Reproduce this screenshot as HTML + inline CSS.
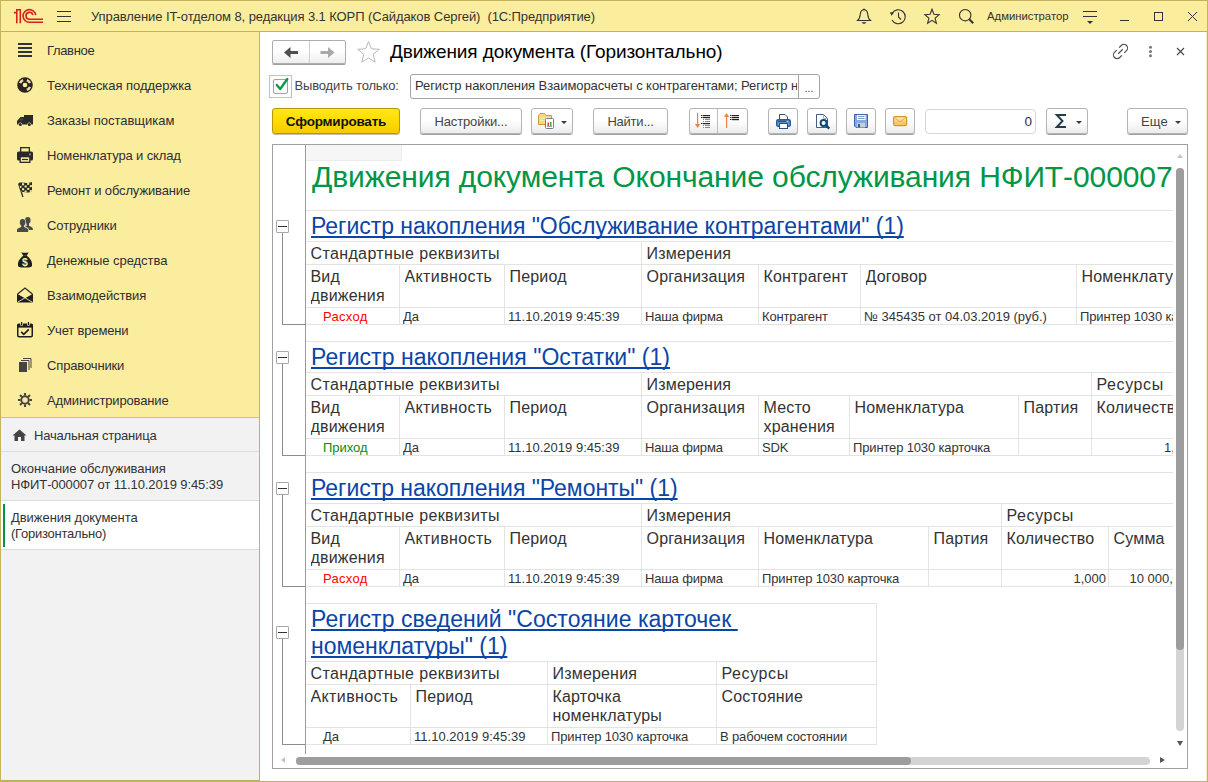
<!DOCTYPE html><html lang='ru'><head><meta charset='utf-8'><title>Движения документа (Горизонтально)</title><style>
*{box-sizing:border-box;margin:0;padding:0}
html,body{width:1208px;height:782px;overflow:hidden;background:#fff}
body{position:relative;font-family:"Liberation Sans",sans-serif;font-size:13px;color:#333}
.abs{position:absolute}
i{display:block;font-style:normal}
#frame{position:absolute;left:0;top:0;width:1208px;height:782px;border:1px solid #c3b35a;z-index:50}
#frame i{position:absolute;right:0;top:31px;width:1px;height:749px;background:#f3edcf}
#titlebar{position:absolute;left:0;top:0;width:1208px;height:32px;background:#fbed9e;border-bottom:1px solid #c3b35a}
#titlebar .t{position:absolute;left:91px;top:8.500px;font-size:13px;line-height:16px;white-space:pre;color:#333}
#user{position:absolute;left:987px;top:8px;font-size:11.3px;line-height:16px;color:#333}
#side{position:absolute;left:0;top:32px;width:260px;height:749px;background:#f2f2f2;border-right:1px solid #c3b35a;border-bottom:1px solid #bcab58}
#sections{position:absolute;left:0;top:0;width:259px;height:386px;background:#fbed9e;border-bottom:1px solid #d2c277}
.sec{position:absolute;left:0;width:259px;height:35px}
.sec span{position:absolute;left:47px;top:10.500px;line-height:16px;font-size:13px;white-space:nowrap;color:#2e2e33}
.sec svg{position:absolute;left:16px;top:9px}
#open{position:absolute;left:0;top:386px;width:259px;height:364px}
.oi{position:absolute;left:0;width:259px;border-bottom:1px solid #dcdcdc;font-size:13px;line-height:16px;color:#333}
.oi span{position:absolute;left:11px;white-space:nowrap}
#main{position:absolute;left:260px;top:32px;width:947px;height:749px;background:#fff}
.btn{position:absolute;height:26px;top:108px;border:1px solid #b4b4b4;border-radius:3px;background:linear-gradient(#ffffff,#ffffff 45%,#ececec);box-shadow:0 1px 0 #a0a0a0;font-size:13px;line-height:25px;text-align:center;color:#444;white-space:nowrap}
.btn svg{position:absolute}
.dd{position:absolute;width:0;height:0;border-left:3px solid transparent;border-right:3px solid transparent;border-top:3px solid #3a3a3a}
#sheet{position:absolute;left:272px;top:144px;width:916px;height:625px;border:1px solid #a0a0a0;background:#fff;overflow:hidden}
#view{position:absolute;left:33px;top:0;width:867px;height:608px;overflow:hidden}
.hl{position:absolute;height:1px;background:#e3e3e3}
.vl{position:absolute;width:1px;background:#e3e3e3}
.c{position:absolute;white-space:nowrap;overflow:hidden;color:#333}
.h{font-size:16px;line-height:19.500px;letter-spacing:0.18px}
.d{font-size:13px;line-height:16px;letter-spacing:-0.15px}
.lnk{position:absolute;font-size:23px;line-height:27px;color:#0b45a8;text-decoration:underline;text-decoration-thickness:2px;text-underline-offset:2px;text-decoration-skip-ink:none;letter-spacing:-0.03px;white-space:nowrap}
.gl{position:absolute;background:#8c8c8c}
.gb{position:absolute;width:13px;height:13px;border:1px solid #a8a8a8;border-radius:1px;background:#fff}
.gb i{position:absolute;left:1px;top:5px;width:9px;height:1px;background:#333}
</style></head><body>
<div id='titlebar'>
<svg class='abs' style='left:13px;top:8px' width='31' height='16' viewBox='0 0 31 16'>
<g fill='none' stroke='#d8201c' stroke-width='1.600'>
<path d='M0.900 4.600H3.800V15.200M3.800 4.600V1.700H7.300V15.200'/>
<path d='M22.700 7.200A6.350 6.350 0 1 0 16.400 14.300H30'/>
<path d='M19.800 7A3.450 3.450 0 1 0 16.400 11.200H30'/>
</g></svg>
<svg class='abs' style='left:57px;top:10px' width='15' height='13' viewBox='0 0 15 13'><g stroke='#333' stroke-width='1'><path d='M0 1.500H14M0 6.500H14M0 11.500H14'/></g></svg>
<div class='t' style='letter-spacing:-0.088px'>Управление IT-отделом 8, редакция 3.1 КОРП (Сайдаков Сергей)  (1С:Предприятие)</div>
<svg class='abs' style='left:856px;top:8px' width='16' height='17' viewBox='0 0 16 17'><g fill='none' stroke='#333' stroke-width='1.100'><path d='M1.600 12.500C4 10.800 4 8 4.400 5.300C4.800 3 6.200 1.800 8 1.800C9.800 1.800 11.200 3 11.600 5.300C12 8 12 10.800 14.400 12.500Z'/></g><circle cx='8' cy='1.300' r='0.900' fill='#333'/><path d='M5.400 14.200H10.600L8 16.200Z' fill='#333'/></svg>
<svg class='abs' style='left:889px;top:8px' width='18' height='17' viewBox='0 0 18 17'><g fill='none' stroke='#333' stroke-width='1.100'><path d='M3.200 5.200 A7 7 0 1 1 3 12'/><path d='M9.500 4.500 V9 L12 11.500'/></g><path d='M0.800 4.200 L5 4.600 L2.600 7.800Z' fill='#333'/></svg>
<svg class='abs' style='left:923px;top:8px' width='18' height='17' viewBox='0 0 18 17'><path d='M9 1.200 L10.900 6.300 L16.100 6.700 L12.100 10.100 L13.400 15.200 L9 12.400 L4.600 15.200 L5.900 10.100 L1.900 6.700 L7.100 6.300 Z' fill='none' stroke='#333' stroke-width='1.100' stroke-linejoin='miter'/></svg>
<svg class='abs' style='left:958px;top:8px' width='17' height='17' viewBox='0 0 17 17'><circle cx='7.200' cy='7.200' r='5.700' fill='none' stroke='#333' stroke-width='1.100'/><path d='M11.300 11.300 L15.200 15.200' stroke='#333' stroke-width='2'/></svg>
<div id='user'>Администратор</div>
<svg class='abs' style='left:1082px;top:10px' width='16' height='15' viewBox='0 0 16 15'><path d='M1 1.500H15M1 6.500H15' stroke='#333' stroke-width='1'/><path d='M5 11H11L8 14Z' fill='#333'/></svg>
<svg class='abs' style='left:1120px;top:11px' width='80' height='12' viewBox='0 0 80 12'><g fill='none' stroke='#333' stroke-width='1'><path d='M0 9.500H9'/><rect x='34.500' y='1.500' width='8' height='8'/><path d='M68 1L77 10M77 1L68 10'/></g></svg>
</div>
<div id='side'><div id='sections'>
<div class='sec' style='top:0px'><svg width='18' height='18' viewBox='0 0 18 18'><g fill='#30343c'><rect x='2' y='2' width='14' height='2'/><rect x='2' y='6' width='14' height='2'/><rect x='2' y='10' width='14' height='2'/><rect x='2' y='14' width='14' height='2'/></g></svg><span style='letter-spacing:-0.339px'>Главное</span></div>
<div class='sec' style='top:35px'><svg width='18' height='18' viewBox='0 0 18 18'><circle cx='9' cy='9' r='7.800' fill='#2b2223'/><g fill='none' stroke='#eadb9e' stroke-width='2.500'><path d='M13.950 10.900A5.300 5.300 0 0 1 10.900 13.950'/><path d='M10.900 4.050A5.300 5.300 0 0 1 13.950 7.100'/><path d='M4.050 7.100A5.300 5.300 0 0 1 7.100 4.050'/></g><circle cx='9' cy='9' r='2.300' fill='#fbed9e'/></svg><span style='letter-spacing:-0.032px'>Техническая поддержка</span></div>
<div class='sec' style='top:70px'><svg width='18' height='18' viewBox='0 0 18 18'><path d='M8 4H17V13.400H1V10L4.500 6H8Z' fill='#2a2a2a'/><path d='M4.900 7.200H7V9.400H3Z' fill='#454545'/><circle cx='4.300' cy='13.600' r='2' fill='#fbed9e'/><circle cx='13.300' cy='13.600' r='2' fill='#fbed9e'/><circle cx='4.300' cy='13.600' r='1.500' fill='#2a2a2a'/><circle cx='13.300' cy='13.600' r='1.500' fill='#2a2a2a'/></svg><span style='letter-spacing:-0.032px'>Заказы поставщикам</span></div>
<div class='sec' style='top:105px'><svg width='18' height='18' viewBox='0 0 18 18'><rect x='4.650' y='1.650' width='8.700' height='5' fill='none' stroke='#2a2a2a' stroke-width='1.300'/><rect x='1' y='5.500' width='16' height='9' rx='1.600' fill='#2a2a2a'/><rect x='13' y='7.500' width='1.800' height='1.800' fill='#8a8a8a'/><rect x='4.150' y='10.650' width='9.700' height='5.700' fill='#fbed9e' stroke='#2a2a2a' stroke-width='1.300'/><path d='M6 13.500H12' stroke='#2a2a2a' stroke-width='1.200'/></svg><span style='letter-spacing:-0.138px'>Номенклатура и склад</span></div>
<div class='sec' style='top:140px'><svg width='18' height='18' viewBox='0 0 18 18'><path d='M2.600 2.600L6.900 16' stroke='#2a2a2a' stroke-width='1.300'/><clipPath id='fl'><path d='M2.600 2C6 0.600 9 3.400 16 1L16 10.500C11 12.800 8 10 5.600 11.600Z'/></clipPath><g clip-path='url(#fl)'><rect x='0' y='0' width='18' height='13' fill='#2a2a2a'/><g fill='#fbed9e' transform='skewY(-4) translate(0 1)'><rect x='6.0' y='1.7' width='2.100' height='2'/><rect x='11.2' y='1.7' width='2.100' height='2'/><rect x='3.4' y='4.2' width='2.100' height='2'/><rect x='8.6' y='4.2' width='2.100' height='2'/><rect x='13.8' y='4.2' width='2.100' height='2'/><rect x='6.0' y='6.7' width='2.100' height='2'/><rect x='11.2' y='6.7' width='2.100' height='2'/><rect x='3.4' y='9.2' width='2.100' height='2'/><rect x='8.6' y='9.2' width='2.100' height='2'/><rect x='13.8' y='9.2' width='2.100' height='2'/><rect x='6.0' y='11.7' width='2.100' height='2'/><rect x='11.2' y='11.7' width='2.100' height='2'/></g></g></svg><span style='letter-spacing:-0.143px'>Ремонт и обслуживание</span></div>
<div class='sec' style='top:175px'><svg width='18' height='18' viewBox='0 0 18 18'><g fill='#4a4a4a'><ellipse cx='11.800' cy='4.400' rx='2.700' ry='3.300'/><path d='M7 14C7 11 9.600 10.600 10.600 9.800V6H13V9.800C14 10.600 17 10.600 17 14Z'/><ellipse cx='6.600' cy='6.500' rx='3.400' ry='4' fill='#fbed9e'/><path d='M0.300 16.700V14C0.300 11 3.800 11.400 4.600 10V8H8.600V10C9.400 11.400 12.900 11 12.900 14V16.700Z' fill='#fbed9e'/><ellipse cx='6.600' cy='6.500' rx='2.800' ry='3.400'/><path d='M1 16V14.200C1 12 4.300 12.100 5.300 10.600V8H7.900V10.600C8.900 12.100 12.200 12 12.200 14.200V16Z'/></g></svg><span style='letter-spacing:-0.081px'>Сотрудники</span></div>
<div class='sec' style='top:210px'><svg width='18' height='18' viewBox='0 0 18 18'><path d='M5.300 1.200C7 2 11 2 12.700 1.200L10.800 4.800H7.200Z' fill='#1e1e1e'/><path d='M7.200 4.800H10.800C14 7.500 16.500 10.500 16 14.500C15.800 16 14.800 16.500 9 16.500C3.200 16.500 2.200 16 2 14.500C1.500 10.500 4 7.500 7.200 4.800Z' fill='#1e1e1e'/><text x='9' y='15.300' font-size='10.500' font-weight='bold' text-anchor='middle' fill='#fbed9e' font-family='Liberation Sans,sans-serif'>$</text></svg><span style='letter-spacing:-0.039px'>Денежные средства</span></div>
<div class='sec' style='top:245px'><svg width='18' height='18' viewBox='0 0 18 18'><path d='M1.600 8L9 2L16.400 8' fill='none' stroke='#2a2a2a' stroke-width='1.300'/><path d='M1 7.800L9 12.200L17 7.800V16.500H1Z' fill='#1e1e1e'/><path d='M1.300 16.400L9 11.800L16.700 16.400' fill='none' stroke='#fbed9e' stroke-width='0.900'/></svg><span style='letter-spacing:-0.11px'>Взаимодействия</span></div>
<div class='sec' style='top:280px'><svg width='18' height='18' viewBox='0 0 18 18'><rect x='1.750' y='3.250' width='14.500' height='12.500' rx='1.200' fill='none' stroke='#1e1e1e' stroke-width='1.500'/><rect x='1.500' y='3' width='15' height='3.600' fill='#1e1e1e'/><g fill='#fbed9e'><rect x='4.300' y='0.800' width='2.600' height='4.200' rx='1'/><rect x='11.100' y='0.800' width='2.600' height='4.200' rx='1'/></g><g fill='#1e1e1e'><rect x='5' y='1' width='1.200' height='3.400'/><rect x='11.800' y='1' width='1.200' height='3.400'/></g><path d='M5.200 10.800L7.800 13.300L12.800 8.300' fill='none' stroke='#1e1e1e' stroke-width='1.700'/></svg><span style='letter-spacing:-0.173px'>Учет времени</span></div>
<div class='sec' style='top:315px'><svg width='18' height='18' viewBox='0 0 18 18'><rect x='3' y='6' width='8' height='10' fill='#444'/><path d='M5 4.500H13V14M7 2.500H15V12' fill='none' stroke='#444' stroke-width='1'/></svg><span style='letter-spacing:-0.141px'>Справочники</span></div>
<div class='sec' style='top:350px'><svg width='18' height='18' viewBox='0 0 18 18'><circle cx='9' cy='9' r='3.700' fill='none' stroke='#444' stroke-width='1.900'/><g stroke='#444' stroke-width='2.100'><path d='M9 2V4.600M9 13.400V16M2 9H4.600M13.400 9H16M4.050 4.050L5.900 5.900M13.950 4.050L12.100 5.900M4.050 13.950L5.900 12.100M13.950 13.950L12.100 12.100'/></g></svg><span style='letter-spacing:-0.145px'>Администрирование</span></div>
</div>
<div id='open'>
<div class='oi' style='top:0;height:34px'><svg class='abs' style='left:12px;top:11px' width='15' height='12' viewBox='0 0 15 12'><path d='M7.500 0.500L14.500 6.500H12.500V12H9V8H6V12H2.500V6.500H0.500Z' fill='#444'/></svg><span style='left:34px;top:10px'><b style='font-weight:normal;letter-spacing:-0.183px'>Начальная страница</b></span></div>
<div class='oi' style='top:34px;height:49px'><span style='top:9px'><b style='font-weight:normal;letter-spacing:-0.074px'>Окончание обслуживания</b><br><b style='font-weight:normal;letter-spacing:-0.105px'>НФИТ-000007 от 11.10.2019 9:45:39</b></span></div>
<div class='oi' style='top:83px;height:49px;background:#fff'><i class='abs' style='left:3px;top:3px;width:2px;height:43px;background:#009646'></i><span style='top:9px'><b style='font-weight:normal;letter-spacing:-0.043px'>Движения документа</b><br><b style='font-weight:normal;letter-spacing:-0.239px'>(Горизонтально)</b></span></div>
</div></div>
<div id='main'></div>
<div class='abs' style='left:272px;top:40px;width:74px;height:24px;border:1px solid #adadad;border-radius:2px;background:linear-gradient(#fff,#fff 45%,#eee);box-shadow:0 1px 0 #a0a0a0'>
<i class='abs' style='left:36px;top:0;width:1px;height:22px;background:#cfcfcf'></i>
<svg class='abs' style='left:11px;top:6px' width='15' height='11' viewBox='0 0 15 11'><path d='M0 5.500L6.500 0V4H14V7H6.500V11Z' fill='#4f4f4f'/></svg>
<svg class='abs' style='left:47px;top:6px' width='15' height='11' viewBox='0 0 15 11'><path d='M14.500 5.500L8 0V4H0.500V7H8V11Z' fill='#a9a9a9'/></svg>
</div>
<svg class='abs' style='left:356px;top:40px' width='25' height='24' viewBox='0 0 25 24'><path d='M12.500 1.500L15.400 8.800L23.300 9.300L17.200 14.400L19.200 22.200L12.500 17.900L5.800 22.200L7.800 14.400L1.700 9.300L9.600 8.800Z' fill='#fff' stroke='#b3b9bf' stroke-width='1'/></svg>
<div class='abs' style='left:390px;top:39.500px;font-size:19px;line-height:24px;color:#000;white-space:nowrap;letter-spacing:-0.089px'>Движения документа (Горизонтально)</div>
<svg class='abs' style='left:1112px;top:43px' width='17' height='17' viewBox='0 0 17 17'><g fill='none' stroke='#4a4a4a' stroke-width='1.100' transform='rotate(-45 8.500 8.500)'><path d='M6.800 4.800H3.700A3.700 3.700 0 0 0 3.700 12.200H6.800'/><path d='M10.200 4.800H13.300A3.700 3.700 0 0 1 13.300 12.200H10.200'/><path d='M5.300 8.500H11.700'/></g></svg>
<svg class='abs' style='left:1148px;top:45px' width='5' height='13' viewBox='0 0 5 13'><g fill='#777'><circle cx='2.500' cy='2.200' r='1.500'/><circle cx='2.500' cy='6.500' r='1.500'/><circle cx='2.500' cy='10.800' r='1.500'/></g></svg>
<svg class='abs' style='left:1176px;top:47px' width='9' height='9' viewBox='0 0 9 9'><path d='M1 1L8 8M8 1L1 8' stroke='#444' stroke-width='1.100'/></svg>
<div class='abs' style='left:269px;top:75px;width:23px;height:23px;border:1px solid #fbc520'></div>
<div class='abs' style='left:273px;top:79px;width:15px;height:15px;border:1px solid #a2a2a2;border-radius:2px;background:#fff'></div>
<svg class='abs' style='left:274px;top:76px' width='16' height='17' viewBox='0 0 16 17'><path d='M2.800 9L6.200 13L13.300 3' fill='none' stroke='#0a9a46' stroke-width='2.300' stroke-linecap='round' stroke-linejoin='round'/></svg>
<div class='abs' style='left:294.500px;top:77.500px;line-height:16px;font-size:13px;letter-spacing:-0.156px;white-space:nowrap;color:#444'>Выводить только:</div>
<div class='abs' style='left:410px;top:74px;width:389px;height:25px;border:1px solid #a3a3a3;border-radius:3px 0 0 3px;background:#fff;overflow:hidden'><span class='abs' style='left:4px;top:3px;width:382px;overflow:hidden;line-height:16px;font-size:13px;letter-spacing:-0.075px;white-space:nowrap;color:#333'>Регистр накопления Взаиморасчеты с контрагентами; Регистр накопления Обслуживание контрагентами</span></div>
<div class='abs' style='left:798px;top:74px;width:22px;height:25px;border:1px solid #a3a3a3;border-radius:0 3px 3px 0;background:#fff;font-size:10px;line-height:27px;text-align:center;color:#333'>...</div>
<div class='btn' style='left:272px;width:128px;border-color:#b39b00;background:linear-gradient(#ffe61e,#ffdc00 50%,#f5ca00);box-shadow:0 1px 0 #c2bfae;color:#111;font-size:13.500px'><b style='letter-spacing:-0.212px'>Сформировать</b></div>
<div class='btn' style='left:420px;width:102px'><b style='font-weight:normal;letter-spacing:-0.115px'>Настройки...</b></div>
<div class='btn' style='left:531px;width:42px'><svg style='left:6px;top:4px' width='17' height='17' viewBox='0 0 17 17'><path d='M0.500 2.500L2 0.500H6.500L8 2.500H13.500V11.500H0.500Z' fill='#f7d788' stroke='#d09a35' stroke-width='1'/><path d='M1.500 5H12.500M1.500 7.500H12.500' stroke='#fbe9b5' stroke-width='1'/><rect x='7.500' y='5.500' width='8' height='10' rx='1' fill='#fff' stroke='#6b7f95' stroke-width='1'/><rect x='9.500' y='9.500' width='1.500' height='3.500' fill='#e0402f'/><rect x='12' y='9' width='1.500' height='4' fill='#35a64a'/><path d='M9 13.500H14' stroke='#888' stroke-width='0.800'/></svg><i class='dd' style='left:29px;top:12px'></i></div>
<div class='btn' style='left:593px;width:75px'><b style='font-weight:normal;letter-spacing:-0.216px'>Найти...</b></div>
<div class='btn' style='left:689px;width:59px'><i class='abs' style='left:27px;top:0;width:1px;height:24px;background:#bdbdbd'></i>
<svg style='left:4px;top:3px' width='18' height='18' viewBox='0 0 18 18'><rect x='3' y='1' width='1.200' height='13' fill='#f0813f'/><path d='M0.900 12H6.300L3.600 16Z' fill='#f0813f'/><rect x='7' y='3' width='1.500' height='1' fill='#222'/><rect x='9' y='3' width='7' height='1.200' fill='#222'/><rect x='7' y='5' width='1.500' height='1' fill='#222'/><rect x='9' y='5' width='7' height='1.200' fill='#222'/><rect x='9' y='7' width='1' height='1' fill='#8a8a8a'/><rect x='11' y='7' width='5' height='1' fill='#8a8a8a'/><rect x='9' y='9' width='1' height='1' fill='#8a8a8a'/><rect x='11' y='9' width='5' height='1' fill='#8a8a8a'/><rect x='7' y='11' width='1.500' height='1' fill='#222'/><rect x='9' y='11' width='7' height='1.200' fill='#222'/><rect x='9' y='13' width='1' height='1' fill='#8a8a8a'/><rect x='11' y='13' width='5' height='1' fill='#8a8a8a'/><rect x='9' y='15' width='1' height='1' fill='#8a8a8a'/><rect x='11' y='15' width='5' height='1' fill='#8a8a8a'/></svg>
<svg style='left:33px;top:3px' width='18' height='18' viewBox='0 0 18 18'><rect x='3' y='3' width='1.200' height='13' fill='#f0813f'/><path d='M0.900 5H6.300L3.600 1Z' fill='#f0813f'/><rect x='7' y='3' width='1.500' height='1' fill='#222'/><rect x='9' y='3' width='7' height='1.200' fill='#222'/><rect x='7' y='5' width='1.500' height='1' fill='#222'/><rect x='9' y='5' width='7' height='1.200' fill='#222'/><rect x='7' y='7' width='1.500' height='1' fill='#222'/><rect x='9' y='7' width='7' height='1.200' fill='#222'/></svg></div>
<div class='btn' style='left:768px;width:30px'><svg style='left:6px;top:4px' width='17' height='17' viewBox='0 0 17 17'><path d='M4.500 6.500V1.500H10L12.500 4V6.500Z' fill='#fff' stroke='#2d4f78' stroke-width='1'/><rect x='1.700' y='6.700' width='13.600' height='6.600' rx='1.500' fill='#7ba2d0' stroke='#2b5a92' stroke-width='1.400'/><rect x='2.500' y='7.500' width='12' height='1.800' fill='#2b5a92'/><rect x='11.500' y='7.800' width='2' height='1' fill='#dfe9f5'/><rect x='4.500' y='10.500' width='8' height='5' fill='#fff' stroke='#2d4f78' stroke-width='1'/></svg></div>
<div class='btn' style='left:807px;width:30px'><svg style='left:7px;top:4px' width='17' height='17' viewBox='0 0 17 17'><path d='M1.500 1.500H8.500L12.500 5.500V14.500H1.500Z' fill='#fff' stroke='#44607f' stroke-width='1'/><path d='M8.500 1.500V5.500H12.500' fill='none' stroke='#8fa3b8' stroke-width='0.800'/><circle cx='8.600' cy='9.900' r='3' fill='#fff' stroke='#0b4a7a' stroke-width='2'/><path d='M11 12.300L14.300 15.600' stroke='#0b4a7a' stroke-width='2.400'/></svg></div>
<div class='btn' style='left:846px;width:30px'><svg style='left:6px;top:4px' width='17' height='17' viewBox='0 0 17 17'><path d='M1.500 1.500H14.500V14.500H3L1.500 13Z' fill='#86acdf' stroke='#3d64a4' stroke-width='1'/><rect x='4' y='2' width='8.500' height='5' fill='#fff'/><path d='M5 3.500H11.500M5 5.500H11.500' stroke='#6f94cc' stroke-width='0.900'/><rect x='4' y='10' width='8' height='4.500' fill='#c8cfcf'/><rect x='5' y='11' width='2' height='3.500' fill='#2f58a0'/></svg></div>
<div class='btn' style='left:885px;width:30px'><svg style='left:6px;top:6px' width='17' height='13' viewBox='0 0 17 13'><defs><linearGradient id='mg' x1='0' y1='0' x2='0' y2='1'><stop offset='0' stop-color='#fdeab2'/><stop offset='1' stop-color='#f4c25a'/></linearGradient></defs><rect x='1.600' y='1.600' width='13' height='9' rx='1.500' fill='url(#mg)' stroke='#d9952b' stroke-width='1.300'/><path d='M2.300 2.300L8.100 7L13.900 2.300' fill='none' stroke='#dfa040' stroke-width='0.900'/><path d='M2.300 10L6.300 6M13.900 10L9.900 6' fill='none' stroke='#e8b558' stroke-width='0.700'/></svg></div>
<div class='abs' style='left:925px;top:109px;width:111px;height:25px;border:1px solid #d7d7d7;border-radius:4px;background:#fff;text-align:right;padding-right:3px;font-size:13.500px;line-height:23px;color:#333'>0</div>
<div class='btn' style='left:1046px;width:42px'><svg style='left:7px;top:4px' width='14' height='17' viewBox='0 0 14 17'><path d='M12 2H2.800L8.500 8L2.800 14H12' fill='none' stroke='#263c4c' stroke-width='2' stroke-linejoin='miter'/></svg><i class='dd' style='left:29px;top:12px'></i></div>
<div class='btn' style='left:1127px;width:61px;text-align:left;padding-left:13px'><b style='font-weight:normal;letter-spacing:0.183px'>Еще</b><i class='dd' style='left:47px;top:12px'></i></div>
<div id='sheet'>
<i class='abs' style='left:32px;top:0;width:1px;height:609px;background:#9a9a9a'></i>
<i class='gl' style='left:9px;top:87px;width:1px;height:92px'></i>
<i class='gl' style='left:9px;top:179px;width:23px;height:1px'></i>
<div class='gb' style='left:3px;top:75px'><i></i></div>
<i class='gl' style='left:9px;top:218px;width:1px;height:92px'></i>
<i class='gl' style='left:9px;top:310px;width:23px;height:1px'></i>
<div class='gb' style='left:3px;top:206px'><i></i></div>
<i class='gl' style='left:9px;top:349px;width:1px;height:92px'></i>
<i class='gl' style='left:9px;top:441px;width:23px;height:1px'></i>
<div class='gb' style='left:3px;top:337px'><i></i></div>
<i class='gl' style='left:9px;top:493px;width:1px;height:106px'></i>
<i class='gl' style='left:9px;top:599px;width:23px;height:1px'></i>
<div class='gb' style='left:3px;top:481px'><i></i></div>
<div id='view'>
<div class='abs' style='left:0;top:0;width:96px;height:16px;background:#f6f6f6;border-right:1px solid #ececec;border-bottom:1px solid #ececec'></div>
<div class='abs' style='left:6px;top:14px;font-size:30px;line-height:36px;color:#009646;white-space:nowrap;letter-spacing:-0.101px'>Движения документа Окончание обслуживания НФИТ-000007</div>
<i class='hl' style='left:-1px;top:65px;width:1095px'></i>
<i class='hl' style='left:-1px;top:96px;width:1095px'></i>
<i class='hl' style='left:-1px;top:119px;width:1095px'></i>
<i class='hl' style='left:-1px;top:162px;width:1095px'></i>
<i class='hl' style='left:-1px;top:179px;width:1095px'></i>
<a class='lnk' style='left:5px;top:68px'>Регистр накопления "Обслуживание контрагентами" (1)</a>
<div class='c h' style='left:4.5px;top:98.75px;width:400px;letter-spacing:0.37px;'>Стандартные реквизиты</div>
<i class='vl' style='left:335px;top:96px;height:23px'></i>
<div class='c h' style='left:340.5px;top:98.75px;width:400px;'>Измерения</div>
<div class='c h' style='left:4.5px;top:121.75px;width:88px;white-space:normal;height:40px'>Вид движения</div>
<div class='c d' style='left:3px;top:163.5px;width:88px;color:#ff0000;padding-left:14px;letter-spacing:0.3px'>Расход</div>
<i class='vl' style='left:93px;top:119px;height:60px'></i>
<div class='c h' style='left:98.5px;top:121.75px;width:99px;letter-spacing:0.38px;white-space:normal;height:40px'>Активность</div>
<div class='c d' style='left:97px;top:163.5px;width:99px;'>Да</div>
<i class='vl' style='left:198px;top:119px;height:60px'></i>
<div class='c h' style='left:203.5px;top:121.75px;width:131px;white-space:normal;height:40px'>Период</div>
<div class='c d' style='left:202px;top:163.5px;width:131px;letter-spacing:0.02px;'>11.10.2019 9:45:39</div>
<i class='vl' style='left:335px;top:119px;height:60px'></i>
<div class='c h' style='left:340.5px;top:121.75px;width:111px;white-space:normal;height:40px'>Организация</div>
<div class='c d' style='left:339px;top:163.5px;width:111px;'>Наша фирма</div>
<i class='vl' style='left:452px;top:119px;height:60px'></i>
<div class='c h' style='left:457.5px;top:121.75px;width:96px;white-space:normal;height:40px'>Контрагент</div>
<div class='c d' style='left:456px;top:163.5px;width:96px;'>Контрагент</div>
<i class='vl' style='left:554px;top:119px;height:60px'></i>
<div class='c h' style='left:559.5px;top:121.75px;width:210px;white-space:normal;height:40px'>Договор</div>
<div class='c d' style='left:558px;top:163.5px;width:210px;letter-spacing:-0.01px;'>№ 345435 от 04.03.2019 (руб.)</div>
<i class='vl' style='left:770px;top:119px;height:60px'></i>
<div class='c h' style='left:775.5px;top:121.75px;width:318px;white-space:normal;height:40px'>Номенклатура</div>
<div class='c d' style='left:774px;top:163.5px;width:318px;'>Принтер 1030 карточка</div>
<i class='hl' style='left:-1px;top:196px;width:1095px'></i>
<i class='hl' style='left:-1px;top:227px;width:1095px'></i>
<i class='hl' style='left:-1px;top:250px;width:1095px'></i>
<i class='hl' style='left:-1px;top:293px;width:1095px'></i>
<i class='hl' style='left:-1px;top:310px;width:1095px'></i>
<a class='lnk' style='left:5px;top:199px'><span style="letter-spacing:0.05px">Регистр накопления "Остатки" (1)</span></a>
<div class='c h' style='left:4.5px;top:229.75px;width:400px;letter-spacing:0.37px;'>Стандартные реквизиты</div>
<i class='vl' style='left:335px;top:227px;height:23px'></i>
<div class='c h' style='left:340.5px;top:229.75px;width:400px;'>Измерения</div>
<i class='vl' style='left:785px;top:227px;height:23px'></i>
<div class='c h' style='left:790.5px;top:229.75px;width:400px;'><span style="letter-spacing:0.6px">Ресурсы</span></div>
<div class='c h' style='left:4.5px;top:252.75px;width:88px;white-space:normal;height:40px'>Вид движения</div>
<div class='c d' style='left:3px;top:294.5px;width:88px;color:#0a8a0a;padding-left:14px;letter-spacing:-0.05px'>Приход</div>
<i class='vl' style='left:93px;top:250px;height:60px'></i>
<div class='c h' style='left:98.5px;top:252.75px;width:99px;letter-spacing:0.38px;white-space:normal;height:40px'>Активность</div>
<div class='c d' style='left:97px;top:294.5px;width:99px;'>Да</div>
<i class='vl' style='left:198px;top:250px;height:60px'></i>
<div class='c h' style='left:203.5px;top:252.75px;width:131px;white-space:normal;height:40px'>Период</div>
<div class='c d' style='left:202px;top:294.5px;width:131px;letter-spacing:0.02px;'>11.10.2019 9:45:39</div>
<i class='vl' style='left:335px;top:250px;height:60px'></i>
<div class='c h' style='left:340.5px;top:252.75px;width:111px;white-space:normal;height:40px'>Организация</div>
<div class='c d' style='left:339px;top:294.5px;width:111px;'>Наша фирма</div>
<i class='vl' style='left:452px;top:250px;height:60px'></i>
<div class='c h' style='left:457.5px;top:252.75px;width:85px;white-space:normal;height:40px'>Место хранения</div>
<div class='c d' style='left:456px;top:294.5px;width:85px;'>SDK</div>
<i class='vl' style='left:543px;top:250px;height:60px'></i>
<div class='c h' style='left:548.5px;top:252.75px;width:163px;white-space:normal;height:40px'>Номенклатура</div>
<div class='c d' style='left:547px;top:294.5px;width:163px;'>Принтер 1030 карточка</div>
<i class='vl' style='left:712px;top:250px;height:60px'></i>
<div class='c h' style='left:717.5px;top:252.75px;width:67px;white-space:normal;height:40px'>Партия</div>
<div class='c d' style='left:716px;top:294.5px;width:67px;'></div>
<i class='vl' style='left:785px;top:250px;height:60px'></i>
<div class='c h' style='left:790.5px;top:252.75px;width:303px;white-space:normal;height:40px'>Количество</div>
<div class='c d' style='left:789px;top:294.5px;width:303px;letter-spacing:0px;left:858px;width:60px'>1,000</div>
<i class='hl' style='left:-1px;top:327px;width:1095px'></i>
<i class='hl' style='left:-1px;top:358px;width:1095px'></i>
<i class='hl' style='left:-1px;top:381px;width:1095px'></i>
<i class='hl' style='left:-1px;top:424px;width:1095px'></i>
<i class='hl' style='left:-1px;top:441px;width:1095px'></i>
<a class='lnk' style='left:5px;top:330px'>Регистр накопления "Ремонты" (1)</a>
<div class='c h' style='left:4.5px;top:360.75px;width:400px;letter-spacing:0.37px;'>Стандартные реквизиты</div>
<i class='vl' style='left:335px;top:358px;height:23px'></i>
<div class='c h' style='left:340.5px;top:360.75px;width:400px;'>Измерения</div>
<i class='vl' style='left:695px;top:358px;height:23px'></i>
<div class='c h' style='left:700.5px;top:360.75px;width:400px;'><span style="letter-spacing:0.6px">Ресурсы</span></div>
<div class='c h' style='left:4.5px;top:383.75px;width:88px;white-space:normal;height:40px'>Вид движения</div>
<div class='c d' style='left:3px;top:425.5px;width:88px;color:#ff0000;padding-left:14px;letter-spacing:0.3px'>Расход</div>
<i class='vl' style='left:93px;top:381px;height:60px'></i>
<div class='c h' style='left:98.5px;top:383.75px;width:99px;letter-spacing:0.38px;white-space:normal;height:40px'>Активность</div>
<div class='c d' style='left:97px;top:425.5px;width:99px;'>Да</div>
<i class='vl' style='left:198px;top:381px;height:60px'></i>
<div class='c h' style='left:203.5px;top:383.75px;width:131px;white-space:normal;height:40px'>Период</div>
<div class='c d' style='left:202px;top:425.5px;width:131px;letter-spacing:0.02px;'>11.10.2019 9:45:39</div>
<i class='vl' style='left:335px;top:381px;height:60px'></i>
<div class='c h' style='left:340.5px;top:383.75px;width:111px;white-space:normal;height:40px'>Организация</div>
<div class='c d' style='left:339px;top:425.5px;width:111px;'>Наша фирма</div>
<i class='vl' style='left:452px;top:381px;height:60px'></i>
<div class='c h' style='left:457.5px;top:383.75px;width:164px;white-space:normal;height:40px'>Номенклатура</div>
<div class='c d' style='left:456px;top:425.5px;width:164px;'>Принтер 1030 карточка</div>
<i class='vl' style='left:622px;top:381px;height:60px'></i>
<div class='c h' style='left:627.5px;top:383.75px;width:67px;white-space:normal;height:40px'>Партия</div>
<div class='c d' style='left:626px;top:425.5px;width:67px;'></div>
<i class='vl' style='left:695px;top:381px;height:60px'></i>
<div class='c h' style='left:700.5px;top:383.75px;width:101px;white-space:normal;height:40px'>Количество</div>
<div class='c d' style='left:699px;top:425.5px;width:101px;letter-spacing:0px;text-align:right'>1,000</div>
<i class='vl' style='left:802px;top:381px;height:60px'></i>
<div class='c h' style='left:807.5px;top:383.75px;width:286px;white-space:normal;height:40px'>Сумма</div>
<div class='c d' style='left:806px;top:425.5px;width:286px;letter-spacing:0px;left:823.5px;width:80px'>10 000,00</div>
<i class='hl' style='left:-1px;top:458px;width:571px'></i>
<i class='hl' style='left:-1px;top:516px;width:571px'></i>
<i class='hl' style='left:-1px;top:539px;width:571px'></i>
<i class='hl' style='left:-1px;top:582px;width:571px'></i>
<i class='hl' style='left:-1px;top:599px;width:571px'></i>
<a class='lnk' style='left:5px;top:461px'><span style="letter-spacing:0.045px">Регистр сведений "Состояние карточек&nbsp;</span><br>номенклатуры" (1)</a>
<div class='c h' style='left:4.5px;top:518.75px;width:400px;letter-spacing:0.37px;'>Стандартные реквизиты</div>
<i class='vl' style='left:241px;top:516px;height:23px'></i>
<div class='c h' style='left:246.5px;top:518.75px;width:400px;'>Измерения</div>
<i class='vl' style='left:410px;top:516px;height:23px'></i>
<div class='c h' style='left:415.5px;top:518.75px;width:400px;'><span style="letter-spacing:0.6px">Ресурсы</span></div>
<div class='c h' style='left:4.5px;top:541.75px;width:99px;letter-spacing:0.38px;white-space:normal;height:40px'>Активность</div>
<div class='c d' style='left:3px;top:583.5px;width:99px;padding-left:14px'>Да</div>
<i class='vl' style='left:104px;top:539px;height:60px'></i>
<div class='c h' style='left:109.5px;top:541.75px;width:131px;white-space:normal;height:40px'>Период</div>
<div class='c d' style='left:108px;top:583.5px;width:131px;letter-spacing:0.02px;'>11.10.2019 9:45:39</div>
<i class='vl' style='left:241px;top:539px;height:60px'></i>
<div class='c h' style='left:246.5px;top:541.75px;width:163px;white-space:normal;height:40px'>Карточка номенклатуры</div>
<div class='c d' style='left:245px;top:583.5px;width:163px;'>Принтер 1030 карточка</div>
<i class='vl' style='left:410px;top:539px;height:60px'></i>
<div class='c h' style='left:415.5px;top:541.75px;width:154px;white-space:normal;height:40px'>Состояние</div>
<div class='c d' style='left:414px;top:583.5px;width:154px;'>В рабочем состоянии</div>
<i class='vl' style='left:570px;top:458px;height:142px'></i>
</div>
<i class='abs' style='left:903px;top:23px;width:8px;height:563px;border-radius:4px;background:#d4d4d4'></i>
<i class='abs' style='left:903px;top:23px;width:8px;height:482px;border-radius:4px;background:#9d9d9d'></i>
<i class='abs' style='left:904px;top:9px;width:0;height:0;border-left:3px solid transparent;border-right:3px solid transparent;border-bottom:4px solid #c4c4c4'></i>
<i class='abs' style='left:904px;top:596px;width:0;height:0;border-left:3px solid transparent;border-right:3px solid transparent;border-top:5px solid #555'></i>
<i class='abs' style='left:23px;top:612px;width:854px;height:8px;border-radius:4px;background:#d4d4d4'></i>
<i class='abs' style='left:23px;top:612px;width:615px;height:8px;border-radius:4px;background:#9d9d9d'></i>
<i class='abs' style='left:8px;top:612px;width:0;height:0;border-top:3.500px solid transparent;border-bottom:3.500px solid transparent;border-right:4px solid #c4c4c4'></i>
<i class='abs' style='left:887px;top:612px;width:0;height:0;border-top:3.500px solid transparent;border-bottom:3.500px solid transparent;border-left:5px solid #555'></i>
</div>
<div id='frame'><i></i></div>
</body></html>
